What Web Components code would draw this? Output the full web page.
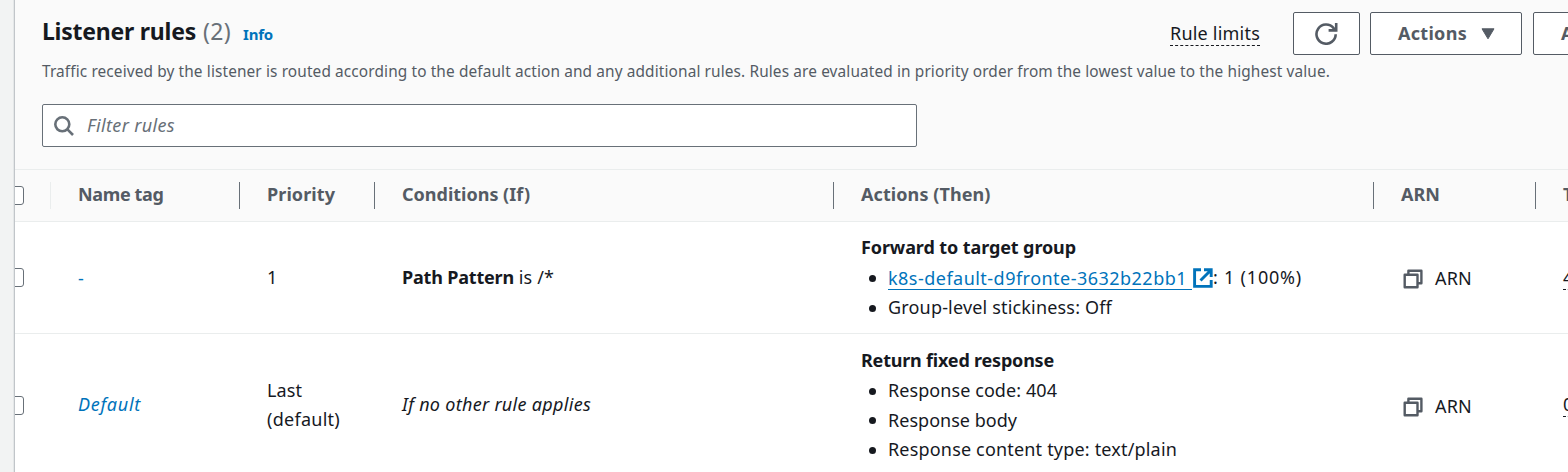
<!DOCTYPE html>
<html lang="en">
<head>
<meta charset="utf-8">
<title>Listener rules</title>
<style>
html, body { margin: 0; height: 100%; overflow: hidden; background: #f2f3f3; }
body { font-family: "Noto Sans", "Open Sans", sans-serif; font-size: 18px; color: #16191f; }
</style>
</head>
<body>
<listener-rules-page></listener-rules-page>
<script>
const define = (name, html, setup) => {
  const template = document.createElement('template');
  template.innerHTML = html.trim();
  customElements.define(name, class extends HTMLElement {
    connectedCallback() {
      if (this.shadowRoot) return;
      this.attachShadow({ mode: 'open' }).append(template.content.cloneNode(true));
      if (setup) setup(this, this.shadowRoot);
    }
  });
};

/* Text run whose tracking is adjusted so that it occupies the width "w". */
define('fit-text', `<style>:host { display: inline-block; white-space: pre; }</style><slot></slot>`, host => {
  const w = parseFloat(host.getAttribute('w'));
  const n = host.textContent.length;
  host.style.fontVariantLigatures = 'none';
  const natural = host.getBoundingClientRect().width;
  host.style.letterSpacing = ((w - natural) / n).toFixed(3) + 'px';
});

define('ui-icon', `
<style>
:host { display: inline-block; flex: none; line-height: 0; }
svg { display: none; fill: none; stroke: currentColor; }
:host([name=search]) .search, :host([name=refresh]) .refresh, :host([name=copy]) .copy,
:host([name=external]) .external, :host([name=caret]) .caret { display: block; }
</style>
<svg class="search" width="20" height="20" viewBox="0 0 20 20" stroke-width="2.6"><circle cx="8.3" cy="8.3" r="7"/><path d="M13.2 13.2 19 19"/></svg>
<svg class="refresh" width="23" height="22" viewBox="0 0 23 22" stroke-width="2.6"><path d="M20.7 11.2A9.6 9.6 0 1 1 18.6 5.1L21 7.6"/><path d="M21.2 0V7.4H13.6"/></svg>
<svg class="copy" width="20" height="20" viewBox="0 0 20 20" stroke-width="2.4" stroke-linejoin="round"><path d="M1.7 5.8H14.5V18.3H1.7Z"/><path d="M5.4 5.8V1.7H18.4V14.3H14.5"/></svg>
<svg class="external" width="20" height="20" viewBox="0 0 20 20" stroke-width="2.9"><path d="M8 1.8H1.6V18.4H18.2V12"/><path d="M11 1.8H18.2V9M18 2 7.5 12.5"/></svg>
<svg class="caret" width="14" height="12" viewBox="0 0 14 12"><path d="M1 .8H13L7 10.8Z" fill="currentColor" stroke-width="1" stroke-linejoin="round"/></svg>`);

define('ui-button', `
<style>
:host { display: flex; flex: none; box-sizing: border-box; height: 43px; align-items: center; justify-content: center;
  border: 1px solid #545b64; border-radius: 2px; background: #fff; color: #545b64; font-weight: 700; }
</style><slot></slot>`);

define('ui-search', `
<style>
:host { display: flex; box-sizing: border-box; width: 875px; height: 43px; align-items: center; gap: 13px; padding-left: 11px;
  border: 1px solid #687078; border-radius: 2px; background: #fff; color: #687078; }
.ph { font-style: italic; line-height: 24px; margin-top: -2px; }
</style><ui-icon name="search"></ui-icon><span class="ph"><slot></slot></span>`);

define('ui-checkbox', `
<style>:host { display: block; flex: none; box-sizing: border-box; width: 19px; height: 19px; margin-left: -10px; border: 1px solid #687078; border-radius: 3px; background: #fff; }</style>`);

define('ui-link', `
<style>
:host { display: inline-flex; color: #0073bb; line-height: 24px; }
:host([external]) { border-bottom: 1px solid #0073bb; width: 304px; height: 23px; }
</style><slot></slot>`);

define('arn-copy', `
<style>
:host { display: flex; align-items: center; gap: 12px; padding-left: 2px; padding-top: 2px; }
ui-icon { color: #545b64; }
</style><ui-icon name="copy"></ui-icon><fit-text w="37">ARN</fit-text>`);

define('bullet-item', `
<style>
:host { display: flex; align-items: center; height: 29.7px; }
i { flex: none; width: 7px; height: 7px; margin: 1px 12px 0 8px; border-radius: 50%; background: #16191f; }
</style><i></i><slot></slot>`);

define('rule-actions', `
<style>
:host { display: block; }
.title { height: 29.7px; line-height: 29.7px; font-weight: 700; }
</style><div class="title"><slot name="title"></slot></div><slot></slot>`);

define('table-cell', `
<style>
:host { display: flex; box-sizing: border-box; min-width: 0; align-items: center; padding-left: 27px; line-height: 29.5px; white-space: nowrap; }
:host([check]) { padding-left: 0; overflow: hidden; }
:host([head]) { font-weight: 700; color: #545b64; border-right: 1px solid #687078; height: 27px; line-height: 25px; padding-bottom: 2px; }
:host([head][check]) { border-color: #eaeded; padding-bottom: 0; }
:host([head][last]) { border: 0; }
</style><slot></slot>`);

define('table-row', `
<style>
:host { display: grid; box-sizing: border-box; grid-template-columns: 36px 189px 135px 459px 540px 162px 200px; align-items: center;
  border-bottom: 1px solid #eaeded; background: #fff; }
:host([head]) { height: 53px; background: #fafafa; border-top: 1px solid #eaeded; }
</style><slot></slot>`);

define('panel-header', `
<style>
:host { display: block; box-sizing: border-box; height: 169px; padding: 12px 0 0 27px; background: #fafafa; }
.top { display: flex; height: 43px; align-items: center; }
h2 { display: flex; align-items: baseline; margin: -3px 0 0; font-size: 23px; line-height: 32px; font-weight: 700; }
.count { margin-left: 7px; font-weight: 400; color: #687078; }
.info { margin-left: 12px; font-size: 15px; font-weight: 700; color: #0073bb; }
.limits { margin-left: 897px; height: 23px; line-height: 22px; border-bottom: 1px dashed #16191f; }
.buttons { display: flex; margin-left: 33px; gap: 10px; }
.refresh { width: 67px; }
.actions { width: 152px; gap: 14px; }
.actions fit-text { margin: -2px 0 0 1px; }
.add fit-text { margin-top: -2px; }
.add { width: 130px; margin-left: 1px; justify-content: flex-start; padding-left: 27px; }
p { margin: 6px 0 0; font-size: 15.4px; line-height: 22px; color: #545b64; }
ui-search { margin-top: 21px; }
</style>
<div class="top">
  <h2><fit-text w="154">Listener rules</fit-text><span class="count"><fit-text w="28">(2)</fit-text></span><span class="info"><fit-text w="30">Info</fit-text></span></h2>
  <div class="limits"><fit-text w="90">Rule limits</fit-text></div>
  <div class="buttons">
    <ui-button class="refresh"><ui-icon name="refresh"></ui-icon></ui-button>
    <ui-button class="actions"><fit-text w="69">Actions</fit-text><ui-icon name="caret"></ui-icon></ui-button>
    <ui-button class="add"><fit-text w="76">Add rule</fit-text></ui-button>
  </div>
</div>
<p><fit-text w="1288">Traffic received by the listener is routed according to the default action and any additional rules. Rules are evaluated in priority order from the lowest value to the highest value.</fit-text></p>
<ui-search><fit-text w="88">Filter rules</fit-text></ui-search>`);

define('rules-table', `
<style>
:host { display: block; }
.r1 { height: 112px; } .r2 { height: 143px; }
rule-actions { margin-top: 1px; }
b { font-weight: 700; }
em { font-style: italic; }
.ext { display: flex; align-items: center; }
.ext ui-icon { color: #0073bb; margin-left: 1px; }
.r2 ui-link { margin-top: -2px; }
.r2 arn-copy { margin-top: 2px; }
.tags { height: 23px; line-height: 22px; border-bottom: 1px dashed #16191f; }
</style>
<table-row head>
  <table-cell head check><ui-checkbox></ui-checkbox></table-cell>
  <table-cell head><fit-text w="85.5">Name tag</fit-text></table-cell>
  <table-cell head><fit-text w="68">Priority</fit-text></table-cell>
  <table-cell head><fit-text w="128">Conditions (If)</fit-text></table-cell>
  <table-cell head><fit-text w="129.5">Actions (Then)</fit-text></table-cell>
  <table-cell head><fit-text w="39">ARN</fit-text></table-cell>
  <table-cell head last>Tags</table-cell>
</table-row>
<table-row class="r1">
  <table-cell check><ui-checkbox></ui-checkbox></table-cell>
  <table-cell><ui-link><fit-text w="7">-</fit-text></ui-link></table-cell>
  <table-cell><fit-text w="10">1</fit-text></table-cell>
  <table-cell><b><fit-text w="112">Path Pattern</fit-text></b><fit-text w="40"> is /*</fit-text></table-cell>
  <table-cell><rule-actions>
    <fit-text slot="title" w="215">Forward to target group</fit-text>
    <bullet-item><span class="ext"><ui-link external><fit-text w="299">k8s-default-d9fronte-3632b22bb1</fit-text></ui-link><ui-icon name="external"></ui-icon><fit-text w="89">: 1 (100%)</fit-text></span></bullet-item>
    <bullet-item><fit-text w="224">Group-level stickiness: Off</fit-text></bullet-item>
  </rule-actions></table-cell>
  <table-cell><arn-copy></arn-copy></table-cell>
  <table-cell><span class="tags">4 tags</span></table-cell>
</table-row>
<table-row class="r2">
  <table-cell check><ui-checkbox></ui-checkbox></table-cell>
  <table-cell><ui-link><em><fit-text w="63">Default</fit-text></em></ui-link></table-cell>
  <table-cell><div><fit-text w="35">Last</fit-text><br><fit-text w="73">(default)</fit-text></div></table-cell>
  <table-cell><em><fit-text w="189">If no other rule applies</fit-text></em></table-cell>
  <table-cell><rule-actions>
    <fit-text slot="title" w="193">Return fixed response</fit-text>
    <bullet-item><fit-text w="169">Response code: 404</fit-text></bullet-item>
    <bullet-item><fit-text w="129">Response body</fit-text></bullet-item>
    <bullet-item><fit-text w="289">Response content type: text/plain</fit-text></bullet-item>
  </rule-actions></table-cell>
  <table-cell><arn-copy></arn-copy></table-cell>
  <table-cell><span class="tags">0 tags</span></table-cell>
</table-row>`);

define('listener-rules-page', `
<style>
:host { display: block; height: 472px; overflow: hidden; padding-left: 14px; background: #f2f3f3; }
.panel { width: 1720px; height: 472px; overflow: hidden; border-left: 1px solid #c1c5c9; background: #fff; box-shadow: -1px 0 0 #e4e7e8; }
</style>
<div class="panel"><panel-header></panel-header><rules-table></rules-table></div>`);
</script>
</body>
</html>
